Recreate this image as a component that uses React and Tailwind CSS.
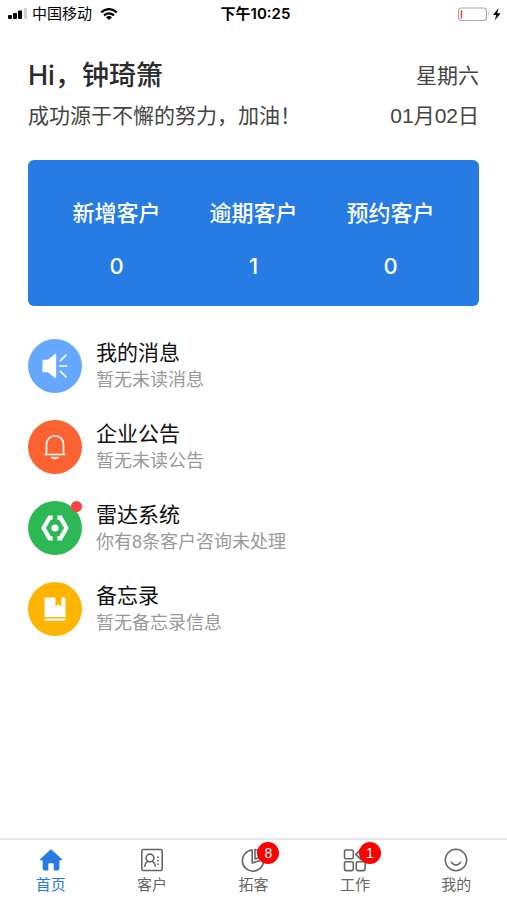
import React, { useState } from 'react';

const stats = [
  { label: '新增客户', value: 0 },
  { label: '逾期客户', value: 1 },
  { label: '预约客户', value: 0 },
];

const SpeakerIcon = () => (
  <svg className="w-[54px] h-[54px]" viewBox="0 0 54 54" fill="none" stroke="#fff" strokeWidth="1.6" strokeLinecap="round">
    <path d="M15.5 20.8h4.5l6.6-5.6q1.600-1 1.600.8v22q0 1.800-1.600.8l-6.600-5.600h-4.500q-1 0-1-1v-10.400q0-1 1-1z" fill="#fff" stroke="none" />
    <path d="M32.2 21.8l5.8-5.6M31.8 27h7M32.2 32.2l5.8 5.6" />
  </svg>
);

const BellIcon = () => (
  <svg className="w-[54px] h-[54px]" viewBox="0 0 54 54" fill="none" stroke="#fff" strokeWidth="1.6" strokeLinecap="round" strokeLinejoin="round">
    <path d="M18.5 34V24.2a8.500 8.500 0 0 1 17 0V34" />
    <path d="M17 34.500h20" />
    <path d="M23.500 37.500q3.500 3.200 7 0z" fill="#fff" strokeWidth="0.8" />
  </svg>
);

const RadarIcon = () => (
  <svg className="w-[54px] h-[54px]" viewBox="0 0 54 54" fill="none" stroke="#fff" strokeWidth="4.2">
    <path d="M24.700 16.600h-3.200L15.600 27l5.900 10.400h3.200M29.300 16.600h3.200L38.400 27l-5.900 10.400h-3.200" />
    <circle cx="27" cy="27" r="3.6" fill="#fff" stroke="none" />
  </svg>
);

const BookIcon = () => (
  <svg className="w-[54px] h-[54px]" viewBox="0 0 54 54" fill="#fff">
    <path d="M17.500 15.500H27.500V24.500l3-2.200 3 2.200V15.500h3q1 0 1 1V35H16.500V16.500q0-1 1-1z" />
    <path d="M16.500 36.400h21v1.600q0 .7-.8.7H17.300q-.8 0-.8-.7z" />
  </svg>
);

const messages = [
  { title: '我的消息', text: '暂无未读消息', color: 'bg-[#66a8ff]', icon: <SpeakerIcon /> },
  { title: '企业公告', text: '暂无未读公告', color: 'bg-[#fc6232]', icon: <BellIcon /> },
  { title: '雷达系统', text: '你有8条客户咨询未处理', color: 'bg-[#2db755]', icon: <RadarIcon />, dot: true },
  { title: '备忘录', text: '暂无备忘录信息', color: 'bg-[#ffb400]', icon: <BookIcon /> },
];

const HomeIcon = () => (
  <svg className="w-6 h-6" viewBox="0 0 24 24" fill="currentColor">
    <path d="M11.300 1.700q.7-.6 1.400 0L23 11.300q.6.900-.5.900H20.400V20.500q0 2-2 2H14.700V16.300q0-1-1-1H10.300q-1 0-1 1V22.500H5.600q-2 0-2-2V12.200H1.500q-1.100 0-.5-.9z" />
  </svg>
);

const CustomerIcon = () => (
  <svg className="w-6 h-6" viewBox="0 0 24 24" fill="none" stroke="currentColor" strokeWidth="1.6">
    <rect x="1.8" y="1.5" width="20.4" height="21" rx="1.5" />
    <circle cx="10" cy="10" r="3.9" />
    <path d="M4.800 18.200q.3-3 3-5M15.400 18.200q-.3-3-3.200-5" strokeLinecap="round" />
    <path d="M17 9.200h2M17 12.700h2M17 16.200h2" strokeWidth="1.2" />
  </svg>
);

const PieIcon = () => (
  <svg className="w-6 h-6" viewBox="0 0 24 24" fill="none" stroke="currentColor" strokeWidth="1.6" strokeLinejoin="round">
    <path d="M11.200 2A10.600 10.600 0 1 0 22.500 11.500L11.200 15z" />
    <path d="M14 1.500V11L22.500 8.300A10 10 0 0 0 14 1.500z" />
  </svg>
);

const WorkIcon = () => (
  <svg className="w-6 h-6" viewBox="0 0 24 24" fill="none" stroke="currentColor" strokeWidth="1.6">
    <rect x="1.5" y="2" width="8.8" height="8.8" rx="1.5" />
    <rect x="1.5" y="13.8" width="8.8" height="8.8" rx="1.5" />
    <rect x="13.3" y="13.8" width="8.8" height="8.8" rx="1.5" />
    <path d="M12.700 6.400l5.400-5.200 5.400 5.200-5.400 5.200z" strokeLinejoin="round" />
  </svg>
);

const SmileIcon = () => (
  <svg className="w-6 h-6" viewBox="0 0 24 24" fill="none" stroke="currentColor" strokeWidth="1.5" strokeLinecap="round">
    <circle cx="12" cy="12" r="10.7" />
    <path d="M7.500 14.500q4.500 5.200 9 0" strokeWidth="1.8" />
  </svg>
);

const tabs = [
  { name: '首页', icon: <HomeIcon /> },
  { name: '客户', icon: <CustomerIcon /> },
  { name: '拓客', icon: <PieIcon />, badge: 8 },
  { name: '工作', icon: <WorkIcon />, badge: 1 },
  { name: '我的', icon: <SmileIcon /> },
];

const StatusBar = () => (
  <div className="grid grid-cols-3 items-center h-7 pl-2 pr-1 text-black">
    <div className="flex items-center gap-1">
      <svg className="w-5 h-3" viewBox="0 0 20 12">
        <rect x="0" y="7" width="4" height="4" rx="1" />
        <rect x="5" y="5" width="4" height="6" rx="1" />
        <rect x="10" y="2.500" width="4" height="8.500" rx="1" />
        <rect x="16" y="0" width="3" height="11" rx="1" fill="#d0d0d0" />
      </svg>
      <span className="text-[15px] leading-5 whitespace-nowrap">中国移动</span>
      {/* Wifi */}
      <svg className="w-[18px] h-3 ml-1" viewBox="0 0 18 12" fill="none" stroke="#000" strokeWidth="2.2">
        <path d="M1.200 4.400Q9-2.200 16.800 4.400M4 7.400q5-4 10 0" />
        <path d="M9 12L6 9.200q3-2.200 6 0z" fill="#000" stroke="none" />
      </svg>
    </div>
    <div className="text-center text-[15px] leading-5 font-semibold font-[Inter,'Noto_Sans_CJK_SC',sans-serif]">
      下午10:25
    </div>
    {/* Battery */}
    <div className="flex justify-end">
      <svg className="w-[46px] h-[15px]" viewBox="0 0 46 15">
        <rect x="1.5" y="1" width="28" height="12.5" rx="3" fill="none" stroke="#a8a8a8" strokeWidth="1.2" />
        <rect x="3.6" y="3" width="1.6" height="8.5" rx="0.5" fill="#f5503c" />
        <path d="M31 5q1.800 2.200 0 4.500z" fill="#a8a8a8" />
        <path d="M41.500 1l-5.500 7h3.300l-1.600 5.500 6-7.300h-3.500z" />
      </svg>
    </div>
  </div>
);

const App = () => {
  const [active, setActive] = useState('首页');

  return (
    <div
      lang="zh-CN"
      className="min-h-screen bg-white flex flex-col font-['Liberation_Sans','Noto_Sans_CJK_SC',sans-serif]"
    >
      <StatusBar />

      <main className="flex-1 px-7 pt-7">
        {/* Greeting */}
        <header className="flex justify-between text-[21px] text-[#444]">
          <div>
            <h1 className="text-[27px] leading-10 font-medium text-[#2b2b2b] font-[Inter,'Noto_Sans_CJK_SC',sans-serif]">
              Hi，钟琦箫
            </h1>
            <p className="leading-10">成功源于不懈的努力，加油！</p>
          </div>
          <div className="text-right whitespace-nowrap">
            <p className="leading-10">星期六</p>
            <p className="leading-10">01月02日</p>
          </div>
        </header>

        {/* Stats */}
        <section className="mt-6 px-5 pt-8 pb-6 grid grid-cols-3 rounded-md bg-[#267ce2] text-white text-center font-medium font-[Inter,'Noto_Sans_CJK_SC',sans-serif]">
          {stats.map((item) => (
            <div key={item.label}>
              <p className="text-[22px] leading-[42px]">{item.label}</p>
              <p className="mt-4 text-[22px] leading-8">{item.value}</p>
            </div>
          ))}
        </section>

        {/* Messages */}
        <ul className="mt-[33px] pb-8 flex flex-col gap-[27px]">
          {messages.map((item) => (
            <li key={item.title} className="flex items-start gap-[14px]">
              <div className={`relative shrink-0 rounded-full ${item.color}`}>
                {item.icon}
                {item.dot && <span className="absolute top-0 right-0 w-[11px] h-[11px] rounded-full bg-[#fb4141]" />}
              </div>
              <div>
                <h2 className="text-[21px] leading-7 text-[#111]">{item.title}</h2>
                <p className="text-lg leading-[26px] text-[#999]">{item.text}</p>
              </div>
            </li>
          ))}
        </ul>
      </main>

      {/* Tab bar */}
      <nav className="sticky bottom-0 grid grid-cols-5 border-t-2 border-[#e6e6e6] bg-white">
        {tabs.map((tab) => (
          <button
            key={tab.name}
            type="button"
            onClick={() => setActive(tab.name)}
            className={`flex flex-col items-center pt-2 pb-0.5 ${active === tab.name ? 'text-[#267ce2]' : 'text-[#666]'}`}
          >
            <span className="relative">
              {tab.icon}
              {tab.badge && (
                <span className="absolute -top-1.5 left-4 w-[22px] h-[22px] rounded-full bg-[#fe0000] text-white text-sm leading-[22px] text-center">
                  {tab.badge}
                </span>
              )}
            </span>
            <span className="text-[15px] leading-[26px]">{tab.name}</span>
          </button>
        ))}
      </nav>
    </div>
  );
};

export default App;
